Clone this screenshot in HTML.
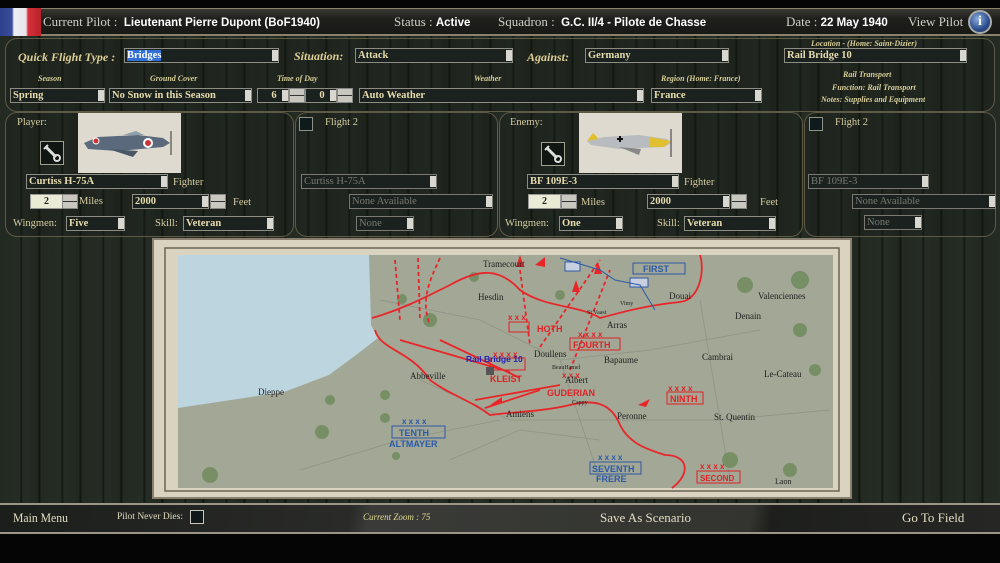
<!DOCTYPE html>
<html><head><meta charset="utf-8"><style>
*{margin:0;padding:0;box-sizing:border-box}
body{width:1000px;height:563px;background:#050505;position:relative;overflow:hidden;font-family:"Liberation Serif",serif;color:#ddd3a4}
.wood{position:absolute;left:0;top:36px;width:1000px;height:467px;background:repeating-linear-gradient(90deg,#232a22 0,#252c24 20px,#11150f 21px,#262d25 23px,#21281f 38px,#0e120c 39px,#21271f 41px);}
.abs{position:absolute;white-space:nowrap}
.panel{position:absolute;border:1px solid #5d5a45;border-radius:12px;background:rgba(20,24,20,.25)}
.dd{position:absolute;height:15px;border:1px solid #8d8d84;background:#1b211e;color:#e6dcae;font-weight:bold;font-size:10.5px;line-height:13px;padding-left:2px;white-space:nowrap;overflow:hidden}
.dd:after{content:"";position:absolute;right:0;top:1px;width:6px;height:11px;background:#d8d8d0}
.dis{color:#777a72;border-color:#7a7a72;font-weight:normal}
.ud{position:absolute;width:16px;height:15px;background:#c8c8c0;border:1px solid #888}
.ud:before{content:"";position:absolute;left:0;right:0;top:6px;height:1px;background:#333}
.lbl{position:absolute;font-style:italic;font-weight:bold;font-size:8px;color:#d7cd98;white-space:nowrap}
.big{position:absolute;font-style:italic;font-weight:bold;font-size:12px;color:#dccf96;white-space:nowrap}
.t{position:absolute;font-size:10.5px;color:#d4cba0;white-space:nowrap}
.cb{position:absolute;width:14px;height:14px;border:1px solid #8f9488;background:#0f1a1c}
.wr{position:absolute;width:24px;height:24px;border:1px solid #a0a090;background:#101612}
.pic{position:absolute;background:#dedad0}
.hdr{position:absolute;font-family:"Liberation Sans",sans-serif;font-size:11.5px;white-space:nowrap;top:14px}
.hdr span{color:#cfcfc8;font-family:"Liberation Serif",serif;font-size:13px}
.hdr b{color:#fff}
.num{position:absolute;height:15px;border:1px solid #999;background:#e9ebd5;color:#222;font-size:10px;text-align:center;line-height:13px;font-weight:bold}
</style></head><body>
<div class="wood"></div>
<div class="abs" style="left:0;top:8px;width:1000px;height:28px;background:linear-gradient(#3a3a34,#1e1f1b 40%,#191a17);border-top:1px solid #8a826a;border-bottom:2px solid #8a826a"></div>
<div class="abs" style="left:0;top:8px;width:41px;height:28px;background:linear-gradient(90deg,#2c3f8c 0,#3a4e9c 12px,#eef0f5 14px,#e5e5ea 26px,#d6313a 28px,#b8222c 41px)"></div>
<div class="hdr" style="left:43px"><span>Current Pilot :&nbsp;</span> <b>Lieutenant Pierre Dupont (BoF1940)</b></div>
<div class="hdr" style="left:394px"><span>Status :</span> <b>Active</b></div>
<div class="hdr" style="left:498px"><span>Squadron :</span> <b>&nbsp;G.C. II/4 - Pilote de Chasse</b></div>
<div class="hdr" style="left:786px"><span>Date :</span> <b>22 May 1940</b></div>
<div class="hdr" style="left:908px"><span>View Pilot</span></div>
<div class="abs" style="left:968px;top:10px;width:24px;height:24px;border-radius:50%;background:radial-gradient(circle at 40% 35%,#8fb0e0,#2a4c8c 60%,#1a2a50);border:2px solid #aaa;color:#fff;font:bold 14px 'Liberation Serif';text-align:center;line-height:20px">i</div>

<div class="panel" style="left:5px;top:38px;width:990px;height:74px"></div>
<div class="big" style="left:18px;top:50px">Quick Flight Type :</div>
<div class="dd" style="left:124px;top:48px;width:155px"><span style="background:#2f6fd6;color:#fff">Bridges</span></div>
<div class="big" style="left:294px;top:49px">Situation:</div>
<div class="dd" style="left:355px;top:48px;width:158px">Attack</div>
<div class="big" style="left:527px;top:50px">Against:</div>
<div class="dd" style="left:585px;top:48px;width:144px">Germany</div>
<div class="lbl" style="left:811px;top:39px">Location - (Home: Saint-Dizier)</div>
<div class="dd" style="left:784px;top:48px;width:183px">Rail Bridge 10</div>
<div class="lbl" style="left:38px;top:74px">Season</div>
<div class="lbl" style="left:150px;top:74px">Ground Cover</div>
<div class="lbl" style="left:277px;top:74px">Time of Day</div>
<div class="lbl" style="left:474px;top:74px">Weather</div>
<div class="lbl" style="left:661px;top:74px">Region (Home: France)</div>
<div class="lbl" style="left:843px;top:70px">Rail Transport</div>
<div class="lbl" style="left:832px;top:83px">Function: Rail Transport</div>
<div class="lbl" style="left:821px;top:95px">Notes: Supplies and Equipment</div>
<div class="dd" style="left:10px;top:88px;width:95px">Spring</div>
<div class="dd" style="left:109px;top:88px;width:143px">No Snow in this Season</div>
<div class="dd" style="left:257px;top:88px;width:32px;text-align:center">6</div>
<div class="ud" style="left:289px;top:88px"></div>
<div class="dd" style="left:305px;top:88px;width:32px;text-align:center">0</div>
<div class="ud" style="left:337px;top:88px"></div>
<div class="dd" style="left:359px;top:88px;width:285px">Auto Weather</div>
<div class="dd" style="left:651px;top:88px;width:111px">France</div>

<div class="panel" style="left:5px;top:112px;width:289px;height:125px"></div>
<div class="panel" style="left:295px;top:112px;width:203px;height:125px"></div>
<div class="panel" style="left:499px;top:112px;width:304px;height:125px"></div>
<div class="panel" style="left:804px;top:112px;width:192px;height:125px"></div>

<div class="t" style="left:17px;top:117px">Player:</div>
<div class="pic" style="left:78px;top:113px;width:103px;height:60px"><svg width="103" height="60"><path d="M6 30 L20 24 L60 22 L85 25 L92 30 L85 34 L40 38 L10 36Z" fill="#5a6a7c"/><path d="M45 22 L58 18 L66 22Z" fill="#8fa0aa"/><path d="M30 36 L55 44 L60 38Z" fill="#4a5866"/><circle cx="70" cy="30" r="4" fill="#c33" stroke="#fff" stroke-width="2"/><circle cx="18" cy="28" r="3" fill="#c33" stroke="#fff"/><line x1="93" y1="18" x2="93" y2="42" stroke="#333"/></svg></div>
<div class="wr" style="left:40px;top:141px"><svg width="22" height="22"><path d="M5 5 L15 15" stroke="#ddd" stroke-width="3"/><circle cx="16" cy="16" r="3" fill="none" stroke="#ddd" stroke-width="2"/><path d="M3 7 L7 3" stroke="#ddd" stroke-width="2"/></svg></div>
<div class="dd" style="left:26px;top:174px;width:142px">Curtiss H-75A</div>
<div class="t" style="left:173px;top:177px">Fighter</div>
<div class="num" style="left:30px;top:194px;width:33px">2</div>
<div class="ud" style="left:62px;top:194px"></div>
<div class="t" style="left:79px;top:196px">Miles</div>
<div class="dd" style="left:132px;top:194px;width:77px">2000</div>
<div class="ud" style="left:210px;top:194px"></div>
<div class="t" style="left:233px;top:197px">Feet</div>
<div class="t" style="left:13px;top:218px">Wingmen:</div>
<div class="dd" style="left:66px;top:216px;width:59px">Five</div>
<div class="t" style="left:155px;top:218px">Skill:</div>
<div class="dd" style="left:183px;top:216px;width:91px">Veteran</div>

<div class="cb" style="left:299px;top:117px"></div>
<div class="t" style="left:325px;top:117px">Flight 2</div>
<div class="dd dis" style="left:301px;top:174px;width:136px">Curtiss H-75A</div>
<div class="dd dis" style="left:349px;top:194px;width:144px">None Available</div>
<div class="dd dis" style="left:356px;top:216px;width:58px">None</div>

<div class="t" style="left:510px;top:117px">Enemy:</div>
<div class="pic" style="left:579px;top:113px;width:103px;height:60px"><svg width="103" height="60"><path d="M8 28 L25 24 L60 22 L88 26 L92 30 L85 34 L40 36 L12 32Z" fill="#b8bcc0"/><path d="M70 24 L92 28 L85 34 L70 34Z" fill="#e0c030"/><path d="M8 28 L14 20 L20 26Z" fill="#e0c030"/><path d="M40 34 L60 42 L62 36Z" fill="#888"/><path d="M38 26 h6 M41 23 v6" stroke="#111" stroke-width="2"/><line x1="92" y1="16" x2="92" y2="44" stroke="#333"/></svg></div>
<div class="wr" style="left:541px;top:142px"><svg width="22" height="22"><path d="M5 5 L15 15" stroke="#ddd" stroke-width="3"/><circle cx="16" cy="16" r="3" fill="none" stroke="#ddd" stroke-width="2"/><path d="M3 7 L7 3" stroke="#ddd" stroke-width="2"/></svg></div>
<div class="dd" style="left:527px;top:174px;width:152px">BF 109E-3</div>
<div class="t" style="left:684px;top:177px">Fighter</div>
<div class="num" style="left:528px;top:194px;width:33px">2</div>
<div class="ud" style="left:561px;top:194px"></div>
<div class="t" style="left:581px;top:197px">Miles</div>
<div class="dd" style="left:647px;top:194px;width:83px">2000</div>
<div class="ud" style="left:731px;top:194px"></div>
<div class="t" style="left:760px;top:197px">Feet</div>
<div class="t" style="left:505px;top:218px">Wingmen:</div>
<div class="dd" style="left:559px;top:216px;width:64px">One</div>
<div class="t" style="left:657px;top:218px">Skill:</div>
<div class="dd" style="left:684px;top:216px;width:92px">Veteran</div>

<div class="cb" style="left:809px;top:117px"></div>
<div class="t" style="left:835px;top:117px">Flight 2</div>
<div class="dd dis" style="left:808px;top:174px;width:121px">BF 109E-3</div>
<div class="dd dis" style="left:852px;top:194px;width:144px">None Available</div>
<div class="dd dis" style="left:864px;top:215px;width:58px">None</div>

<svg class="abs" style="left:0;top:0" width="1000" height="563" font-family="Liberation Sans, sans-serif">
<rect x="153" y="239" width="698" height="259" fill="#d9d3c0" stroke="#8a8070" stroke-width="2"/>
<rect x="165" y="248" width="674" height="243" fill="none" stroke="#6b6455" stroke-width="1.5"/>
<rect x="178" y="255" width="655" height="233" fill="#a3a795"/>
<path d="M178 255 L369 255 L371 325 L378 338 L360 352 L329 375 L284 392 L178 408Z" fill="#bcd5df"/>
<g fill="none" stroke="#8e9384" stroke-width="0.8">
<path d="M380 300 L480 320 L560 360 L650 350 L760 330"/><path d="M420 380 L510 420 L620 420 L720 420 L830 410"/><path d="M300 470 L400 440 L500 420"/><path d="M560 360 L580 420 L600 480"/><path d="M700 300 L710 360 L720 420 L730 480"/><path d="M450 460 L520 430 L600 440"/></g>
<g fill="#6d8a5a" opacity=".8">
<circle cx="430" cy="320" r="7"/><circle cx="402" cy="299" r="5"/><circle cx="385" cy="395" r="5"/><circle cx="330" cy="400" r="5"/><circle cx="322" cy="432" r="7"/><circle cx="385" cy="418" r="5"/><circle cx="396" cy="456" r="4"/><circle cx="210" cy="475" r="8"/><circle cx="745" cy="285" r="8"/><circle cx="800" cy="280" r="9"/><circle cx="800" cy="330" r="7"/><circle cx="815" cy="370" r="6"/><circle cx="730" cy="460" r="8"/><circle cx="790" cy="470" r="7"/><circle cx="560" cy="295" r="5"/><circle cx="474" cy="277" r="5"/></g>
<g fill="none" stroke="#e8262a" stroke-width="1.8">
<path d="M372 318 C400 310 420 300 450 285 C480 268 500 268 520 290 C545 308 580 305 600 318 C630 310 650 305 680 302 C700 300 705 270 700 255"/>
<path d="M375 330 C380 350 410 350 430 380 C450 395 470 400 490 415 C510 412 540 412 570 405 C590 400 610 400 620 425 C630 445 650 450 665 455 C690 455 690 475 672 488"/>
<path d="M540 347 L600 260 M570 370 L610 270 M520 270 L530 345" stroke-dasharray="4 3"/>
<path d="M395 260 L400 320 M418 258 L420 320 M440 258 C430 280 420 300 430 325" stroke-dasharray="4 3"/>
<path d="M520 378 L440 340 M510 372 L400 340 M540 390 L485 408 M560 385 L475 400"/>
</g>
<g fill="#e8262a"><path d="M520 255 l4 12 -8 0z"/><path d="M535 265 l10 -8 0 10z"/><path d="M598 262 l4 12 -8 0z"/><path d="M576 280 l4 12 -8 0z"/><path d="M490 405 l12 -8 0 6z"/><path d="M638 405 l12 -6 -4 8z"/></g>
<g font-size="9" font-weight="bold" fill="#e02226">
<rect x="509" y="322" width="20" height="10" fill="none" stroke="#e02226"/><text x="537" y="332">HOTH</text>
<rect x="570" y="338" width="50" height="12" fill="none" stroke="#e02226"/><text x="573" y="348">FOURTH</text>
<text x="490" y="382">KLEIST</text><rect x="490" y="358" width="35" height="12" fill="none" stroke="#e02226"/>
<text x="547" y="396">GUDERIAN</text>
<rect x="667" y="392" width="36" height="12" fill="none" stroke="#e02226"/><text x="670" y="402">NINTH</text>
<rect x="697" y="471" width="43" height="12" fill="none" stroke="#e02226"/><text x="700" y="481" font-size="8">SECOND</text>
<text x="508" y="320" font-size="8">x x x</text><text x="578" y="337" font-size="8">x x x x</text><text x="493" y="357" font-size="8">x x x x</text><text x="562" y="378" font-size="8">x x x</text><text x="668" y="391" font-size="8">x x x x</text><text x="700" y="469" font-size="8">x x x x</text>
</g>
<g font-size="9" font-weight="bold" fill="#2c5aa8">
<rect x="633" y="263" width="52" height="11" fill="none" stroke="#2c5aa8"/><text x="643" y="272">FIRST</text>
<rect x="392" y="426" width="53" height="12" fill="none" stroke="#2c5aa8"/><text x="399" y="436">TENTH</text><text x="389" y="447">ALTMAYER</text>
<rect x="590" y="462" width="51" height="12" fill="none" stroke="#2c5aa8"/><text x="592" y="472">SEVENTH</text><text x="596" y="482">FRERE</text>
<text x="402" y="424" font-size="8">x x x x</text><text x="598" y="460" font-size="8">x x x x</text>
<rect x="565" y="262" width="15" height="9" fill="#c8d0e0" stroke="#2c5aa8"/><rect x="630" y="278" width="18" height="9" fill="#c8d0e0" stroke="#2c5aa8"/>
<path d="M560 258 L600 270 L615 280 L640 285 L655 310" fill="none" stroke="#2c5aa8" stroke-width="1"/>
<text x="466" y="362" fill="#2222bb" font-size="8.5">Rail Bridge 10</text></g>
<rect x="486" y="367" width="8" height="8" fill="#555"/>
<g font-family="Liberation Serif, serif" font-size="9" fill="#222">
<text x="483" y="267">Tramecourt</text><text x="478" y="300">Hesdin</text><text x="669" y="299">Douai</text><text x="758" y="299">Valenciennes</text><text x="735" y="319">Denain</text><text x="607" y="328">Arras</text><text x="534" y="357">Doullens</text><text x="604" y="363">Bapaume</text><text x="702" y="360">Cambrai</text><text x="764" y="377">Le-Cateau</text><text x="410" y="379">Abbeville</text><text x="258" y="395">Dieppe</text><text x="506" y="417">Amiens</text><text x="617" y="419">Peronne</text><text x="714" y="420">St. Quentin</text><text x="775" y="484" font-size="8">Laon</text>
<text x="565" y="383">Albert</text><text x="552" y="369" font-size="6">BeauHamel</text><text x="572" y="404" font-size="6">Cappy</text><text x="587" y="314" font-size="6">St Vaast</text><text x="620" y="305" font-size="6">Vimy</text></g>
</svg>

<div class="abs" style="left:0;top:503px;width:1000px;height:31px;background:linear-gradient(100deg,#1c1e1b 0,#2a2b28 35%,#3a3b38 37%,#33342f 75%,#1e1f1c 77%,#262724 100%);border-top:2px solid #9a9788;border-bottom:2px solid #9a9788"></div>
<div class="abs" style="left:13px;top:510px;font-size:13px;color:#e0dcc0;transform:scaleX(.9);transform-origin:left">Main Menu</div>
<div class="abs" style="left:117px;top:512px;font-size:9.5px;color:#e0dcc0">Pilot Never Dies:</div>
<div class="cb" style="left:190px;top:510px;background:#11181a;border-color:#c8c8c0"></div>
<div class="abs" style="left:363px;top:512px;font-size:9px;font-style:italic;color:#e0d890">Current Zoom : 75</div>
<div class="abs" style="left:600px;top:510px;font-size:13px;color:#e0dcc0">Save As Scenario</div>
<div class="abs" style="left:902px;top:510px;font-size:13px;color:#e0dcc0">Go To Field</div>
</body></html>
